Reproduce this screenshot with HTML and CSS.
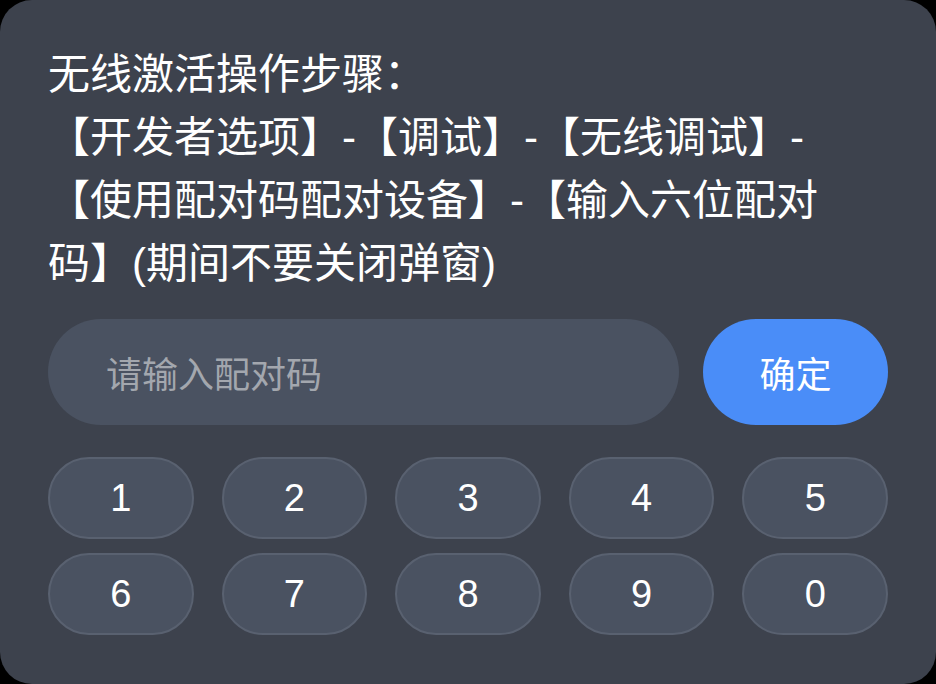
FILE: index.html
```html
<!DOCTYPE html>
<html lang="zh-CN">
<head>
<meta charset="utf-8">
<title>无线激活</title>
<link rel="stylesheet" href="styles.css">
</head>
<body>
<div class="card">
  <p class="steps">无线激活操作步骤：<br>【开发者选项】-【调试】-【无线调试】-【使用配对码配对设备】-【输入六位配对码】(期间不要关闭弹窗)</p>
  <div class="entry">
    <div class="input">请输入配对码</div>
    <div class="confirm">确定</div>
  </div>
  <div class="keypad">
    <div class="key">1</div>
    <div class="key">2</div>
    <div class="key">3</div>
    <div class="key">4</div>
    <div class="key">5</div>
    <div class="key">6</div>
    <div class="key">7</div>
    <div class="key">8</div>
    <div class="key">9</div>
    <div class="key">0</div>
  </div>
</div>
</body>
</html>
```

FILE: styles.css
```css
html, body {
  margin: 0;
  padding: 0;
  background: #000;
}
body {
  width: 936px;
  height: 684px;
  font-family: "Liberation Sans", "Noto Sans CJK SC", sans-serif;
  color: #fff;
}
.card {
  box-sizing: border-box;
  width: 936px;
  height: 684px;
  background: #3d424d;
  border-radius: 32px;
  padding: 43px 48px 0 48px;
  display: flex;
  flex-direction: column;
}
.steps {
  margin: 0;
  padding-right: 24px;
  font-size: 42px;
  line-height: 63px;
  color: #fff;
}
.entry {
  margin-top: 24px;
  display: flex;
  gap: 24px;
  height: 106px;
}
.input {
  flex: 1;
  background: #4a5261;
  border-radius: 53px;
  display: flex;
  align-items: center;
  padding-left: 58px;
  font-size: 36px;
  color: #a3a7ae;
}
.confirm {
  width: 185px;
  background: #4a8df8;
  border-radius: 53px;
  display: flex;
  align-items: center;
  justify-content: center;
  font-size: 36px;
  color: #fff;
}
.keypad {
  margin-top: 32px;
  display: grid;
  grid-template-columns: repeat(5, 1fr);
  column-gap: 28px;
  row-gap: 14px;
}
.key {
  box-sizing: border-box;
  height: 82px;
  background: #4a5261;
  border: 2px solid #596170;
  border-radius: 41px;
  display: flex;
  align-items: center;
  justify-content: center;
  font-size: 38px;
  color: #fff;
}
```
